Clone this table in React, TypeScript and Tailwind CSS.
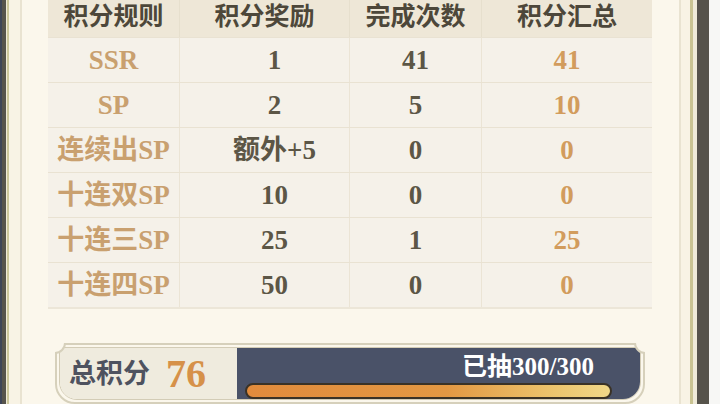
import React from 'react';

const serif = { fontFamily: '"Liberation Serif", "Noto Sans CJK SC", serif' };

const rows = [
  { rule: 'SSR', reward: '1', count: '41', total: '41' },
  { rule: 'SP', reward: '2', count: '5', total: '10' },
  { rule: '连续出SP', reward: '额外+5', count: '0', total: '0' },
  { rule: '十连双SP', reward: '10', count: '0', total: '0' },
  { rule: '十连三SP', reward: '25', count: '1', total: '25' },
  { rule: '十连四SP', reward: '50', count: '0', total: '0' },
];

const headers = ['积分规则', '积分奖励', '完成次数', '积分汇总'];

// concave corner cut for the score plate
const Notch = ({ side }: { side: 'left' | 'right' }) => (
  <div className={`absolute top-[-2px] w-[11px] h-[11px] overflow-hidden ${side === 'left' ? 'left-[-2px]' : 'right-[-2px]'}`}>
    <div
      className={`absolute top-[-11px] w-[22px] h-[22px] rounded-full bg-[#fbf7ec] border-2 border-[#d6d0bb] ${side === 'left' ? 'left-[-11px]' : 'right-[-11px]'}`}
    />
  </div>
);

const App = () => {
  return (
    <div className="w-[720px] h-[404px] overflow-hidden flex bg-[#fbf8ee]" style={serif}>
      {/* left frame */}
      <div className="w-[2px] bg-[#3e4557]" />
      <div className="w-[4px] bg-[#57544c]" />
      <div className="w-[1px] bg-[#efead8]" />
      <div className="w-[2px] bg-[#cdc79c]" />
      <div className="w-[11px] bg-[#f8f3e5]" />
      <div className="w-[2px] bg-[#e9e3d1]" />

      {/* main panel */}
      <div className="flex-1 flex flex-col pl-[26px] pr-[27px] bg-[#fbf7ec]">
        <div className="w-[604px] mt-[-3px] border-b-2 border-[#ece6d8]">
          <div className="grid grid-cols-[132px_170px_132px_170px] h-[40px] bg-[#eee7d7]">
            {headers.map((h, i) => (
              <div
                key={h}
                className={`flex items-center justify-center text-[25px] font-bold text-[#4d473a] ${i < 3 ? 'border-r border-[#e6dfcd]' : ''}`}
              >
                {h}
              </div>
            ))}
          </div>
          {rows.map((r) => (
            <div key={r.rule} className="grid grid-cols-[132px_170px_132px_170px] h-[45px] bg-[#f5f1e9] border-t border-[#e9e2d2] font-bold text-[27px]">
              <div className="flex items-center justify-center border-r border-[#ebe4d5] text-[#c9a06f]">{r.rule}</div>
              <div className="flex items-center justify-center pl-[20px] border-r border-[#ebe4d5] text-[#5c5646]">{r.reward}</div>
              <div className="flex items-center justify-center border-r border-[#ebe4d5] text-[#5c5646]">{r.count}</div>
              <div className="flex items-center justify-center text-[#d29c5d]">{r.total}</div>
            </div>
          ))}
        </div>

        {/* total bar */}
        <div className="relative mt-[34px] ml-[7px] mr-[7px] h-[64px] flex rounded-bl-[20px] rounded-br-[20px] rounded-tl-[6px] rounded-tr-[6px] border-2 border-[#d6d0bb] p-[2px]">
          <div className="flex-1 flex rounded-bl-[18px] rounded-br-[18px] rounded-tl-[6px] rounded-tr-[6px] overflow-hidden border border-[#d3ccb6]">
            <div className="w-[177px] flex items-center pl-[9px] bg-[#efebde]">
              <span className="text-[27px] leading-[44px] font-bold text-[#4e525f]">总积分</span>
              <span className="ml-[16px] text-[40px] leading-[44px] font-bold text-[#d69149]">76</span>
            </div>
            <div className="flex-1 flex flex-col bg-[#4a5268] pt-[5px] pl-[8px] pr-[28px]">
              <div className="self-end pr-[18px] text-[25px] leading-[27px] font-bold text-white">已抽300/300</div>
              <div className="mt-[3px] h-[16px] rounded-full border-[2px] border-[#3a3226] bg-[linear-gradient(90deg,#e18b3c_0%,#e39843_55%,#ecc56e_85%,#f0d788_100%)]" />
            </div>
          </div>
          <Notch side="left" />
          <Notch side="right" />
        </div>
      </div>

      {/* right frame */}
      <div className="w-[2px] bg-[#e9e3d1]" />
      <div className="w-[9px] bg-[#f8f3e5]" />
      <div className="w-[3px] bg-[#c9c392]" />
      <div className="w-[4px] bg-[#efead8]" />
      <div className="w-[12px] bg-[#56534b]" />
      <div className="w-[11px] bg-[#f7f7f5]" />
    </div>
  );
};

export default App;
